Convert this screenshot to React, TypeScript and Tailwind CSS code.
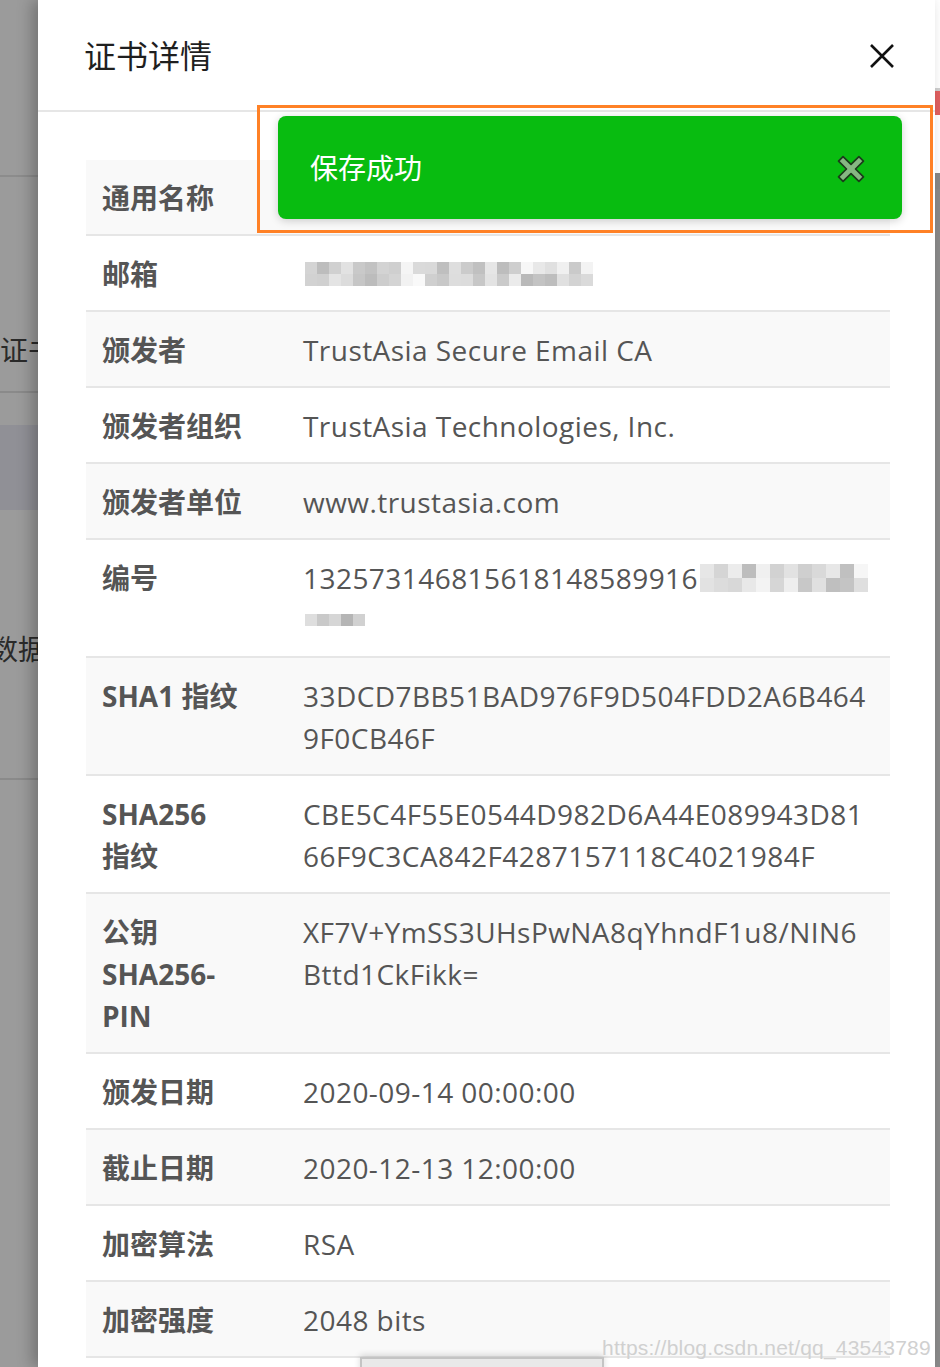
import React from "react";

type Row = { label: React.ReactNode; value: React.ReactNode };

const emailMosaic = [
  ["#d4d4d4", "#bdbdbd", "#d0d0d0", "#e2e2e2", "#c9c9c9", "#c2c2c2", "#d3d3d3", "#cfcfcf", "#f5f5f5", "#dadada", "#d9d9d9", "#bfbfbf", "#dedede", "#cbcbcb", "#c0c0c0", "#e6e6e6", "#bdbdbd", "#cecece", "#f7f7f7", "#e8e8e8", "#e0e0e0", "#f0f0f0", "#cacaca", "#f3f3f3"],
  ["#d2d2d2", "#d0d0d0", "#e4e4e4", "#dcdcdc", "#c6c6c6", "#bcbcbc", "#cdcdcd", "#d4d4d4", "#f2f2f2", "#f9f9f9", "#cfcfcf", "#c8c8c8", "#dddddd", "#dcdcdc", "#c7c7c7", "#e3e3e3", "#cacaca", "#ebebeb", "#b9b9b9", "#c3c3c3", "#bdbdbd", "#e0e0e0", "#d3d3d3", "#dadada"],
];

const serialMosaic = [
  ["#e6e6e6", "#d5d5d5", "#ececec", "#bdbdbd", "#f0f0f0", "#d2d2d2", "#e2e2e2", "#cfcfcf", "#d9d9d9", "#e7e7e7", "#c0c0c0", "#f6f6f6"],
  ["#e2e2e2", "#dcdcdc", "#d8d8d8", "#e8e8e8", "#f3f3f3", "#d6d6d6", "#eeeeee", "#c8c8c8", "#e0e0e0", "#bfbfbf", "#c4c4c4", "#dfdfdf"],
];

const serialMosaic2 = [["#dedede", "#c9c9c9", "#d6d6d6", "#b5b5b5", "#d1d1d1"]];

function Mosaic({ rows, size }: { rows: string[][]; size: number }) {
  return (
    <div className="flex flex-col">
      {rows.map((r, i) => (
        <div key={i} className="flex">
          {r.map((c, j) => (
            <div key={j} style={{ backgroundColor: c, width: size, height: size }} />
          ))}
        </div>
      ))}
    </div>
  );
}

const rows: Row[] = [
  { label: "通用名称", value: "" },
  {
    label: "邮箱",
    value: (
      <div className="h-[42px] flex items-center pl-[2px]">
        <Mosaic rows={emailMosaic} size={12} />
      </div>
    ),
  },
  { label: "颁发者", value: "TrustAsia Secure Email CA" },
  { label: "颁发者组织", value: "TrustAsia Technologies, Inc." },
  { label: "颁发者单位", value: "www.trustasia.com" },
  {
    label: "编号",
    value: (
      <>
        <div className="flex items-center whitespace-nowrap">
          <span>132573146815618148589916</span>
          <div className="ml-[2px]">
            <Mosaic rows={serialMosaic} size={14} />
          </div>
        </div>
        <div className="h-[42px] flex items-center pl-[2px]">
          <Mosaic rows={serialMosaic2} size={12} />
        </div>
      </>
    ),
  },
  {
    label: "SHA1 指纹",
    value: (
      <>
        <div>33DCD7BB51BAD976F9D504FDD2A6B464</div>
        <div>9F0CB46F</div>
      </>
    ),
  },
  {
    label: (
      <>
        <div>SHA256</div>
        <div>指纹</div>
      </>
    ),
    value: (
      <>
        <div>CBE5C4F55E0544D982D6A44E089943D81</div>
        <div>66F9C3CA842F4287157118C4021984F</div>
      </>
    ),
  },
  {
    label: (
      <>
        <div>公钥</div>
        <div>SHA256-</div>
        <div>PIN</div>
      </>
    ),
    value: (
      <>
        <div>XF7V+YmSS3UHsPwNA8qYhndF1u8/NIN6</div>
        <div>Bttd1CkFikk=</div>
      </>
    ),
  },
  { label: "颁发日期", value: "2020-09-14 00:00:00" },
  { label: "截止日期", value: "2020-12-13 12:00:00" },
  { label: "加密算法", value: "RSA" },
  { label: "加密强度", value: "2048 bits" },
];

export default function App() {
  return (
    <div className="w-[940px] h-[1367px] overflow-hidden flex bg-[#9b9b9b] font-['Open_Sans','Noto_Sans_CJK_SC',sans-serif]">
      {/* page behind the mask */}
      <div className="w-[38px] shrink-0 flex flex-col overflow-hidden text-[28px] text-[#2a2a2a]">
        <div className="h-[177px] border-b-2 border-[#8c8c8c]" />
        <div className="h-[216px] border-b-2 border-[#8a8a8a] flex items-end pb-[20px] whitespace-nowrap">
          证书
        </div>
        <div className="h-[32px]" />
        <div className="h-[85px] bg-[#909096]" />
        <div className="h-[270px] border-b-2 border-[#8a8a8a] flex items-start pt-[118px] whitespace-nowrap -ml-[10px]">
          数据
        </div>
      </div>

      {/* modal */}
      <div className="relative w-[897px] shrink-0 bg-white shadow-[-6px_0_14px_rgba(0,0,0,0.25)]">
        <div className="h-[112px] border-b-2 border-[#e6e6e6] pl-12 pr-[40px] flex items-center justify-between">
          <span className="text-[32px] text-[#1f1f1f] mt-[2px] -ml-[2px]">证书详情</span>
          <svg width="26" height="26" viewBox="0 0 26 26" className="mt-[2px]">
            <path d="M2 2 L24 24 M24 2 L2 24" stroke="#111" strokeWidth="2.6" fill="none" />
          </svg>
        </div>

        <div className="pl-12 pt-12 w-[852px]">
          {rows.map((r, i) => (
            <div
              key={i}
              className={`flex border-b-2 border-[#e6e6e6] text-[28px] leading-[42px] ${i % 2 === 0 ? "bg-[#f9f9f9]" : "bg-white"}`}
            >
              <div className="w-[201px] shrink-0 px-4 pt-[17px] pb-[15px] font-bold text-[#555]">{r.label}</div>
              <div className="flex-1 px-4 pt-[17px] pb-[15px] text-[#555] whitespace-nowrap tracking-[0.45px]">{r.value}</div>
            </div>
          ))}
        </div>

        {/* annotation frame */}
        <div className="absolute left-[219px] top-[105px] w-[676px] h-[128px] border-[3px] border-[#ff8126]" />

        {/* toast */}
        <div className="absolute left-[240px] top-[116px] w-[624px] h-[103px] rounded-lg bg-[#08bc10] shadow-[0_2px_8px_rgba(0,0,0,0.18)] flex items-center justify-between pl-8 pr-[34px]">
          <span className="text-[28px] text-white">保存成功</span>
          <svg width="34" height="34" viewBox="0 0 30 30" className="mt-[2px]">
            <path
              d="M4 8 L8 4 L15 11 L22 4 L26 8 L19 15 L26 22 L22 26 L15 19 L8 26 L4 22 L11 15 Z"
              fill="#86b783"
              stroke="#1c3a1c"
              strokeWidth="1.5"
              strokeLinejoin="round"
            />
          </svg>
        </div>

        {/* button peeking at the bottom */}
        <div className="absolute left-[322px] top-[1357px] w-[244px] h-[20px] bg-[#e9e9e9] border-2 border-[#c4c4c4] shadow-[0_-2px_6px_rgba(0,0,0,0.15)]" />

        {/* watermark */}
        <div className="absolute left-[564px] top-[1335px] text-[21px] leading-[26px] text-[#d0d0d0] font-['Liberation_Sans',sans-serif] tracking-[0.2px] whitespace-nowrap">
          https://blog.csdn.net/qq_43543789
        </div>
      </div>

      {/* right edge */}
      <div className="flex-1 flex flex-col">
        <div className="h-[88px] bg-white" />
        <div className="h-[3px] bg-[#cfcfcf]" />
        <div className="h-[24px] bg-[#e06060]" />
        <div className="h-[58px] bg-white" />
        <div className="h-[16px] bg-[#888]" />
        <div className="flex-1 bg-[#8a8a8a]" />
      </div>
    </div>
  );
}
